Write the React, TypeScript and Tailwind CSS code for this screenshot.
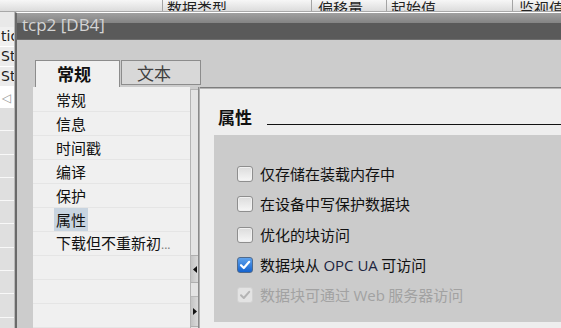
import React from 'react';

function CheckBox({ state }: { state: 'off' | 'on' | 'disabled' }) {
  if (state === 'on') {
    return (
      <span className="w-[16px] h-[16px] rounded-[3px] border border-[#4f6a8c] bg-[linear-gradient(to_bottom,#5ea2ec,#1463cf)] flex items-center justify-center shrink-0">
        <svg width="12" height="12" viewBox="0 0 12 12">
          <path d="M2 6.2 L4.8 9 L10.2 2.8" fill="none" stroke="#ffffff" strokeWidth="2.2" strokeLinecap="round" strokeLinejoin="round" />
        </svg>
      </span>
    );
  }
  if (state === 'disabled') {
    return (
      <span className="w-[16px] h-[16px] rounded-[3px] border border-[#d2d2d2] bg-[#e3e3e3] flex items-center justify-center shrink-0">
        <svg width="12" height="12" viewBox="0 0 12 12">
          <path d="M2 6.2 L4.8 9 L10.2 2.8" fill="none" stroke="#b4b4b4" strokeWidth="2" strokeLinecap="round" strokeLinejoin="round" />
        </svg>
      </span>
    );
  }
  return (
    <span className="w-[16px] h-[16px] rounded-[3px] border border-[#8e8e8e] bg-[linear-gradient(to_bottom,#dcdcdc,#f6f6f6)] shadow-[inset_0_0_0_1px_#f0f0f0] shrink-0" />
  );
}

export default function App() {
  const navItems = ['常规', '信息', '时间戳', '编译', '保护', '属性', '下载但不重新初'];
  const options: { label: React.ReactNode; state: 'off' | 'on' | 'disabled' }[] = [
    { label: '仅存储在装载内存中', state: 'off' },
    { label: '在设备中写保护数据块', state: 'off' },
    { label: '优化的块访问', state: 'off' },
    {
      label: (
        <>
          数据块从 <span className="font-['Open_Sans',sans-serif] text-[#1c2440]">OPC UA</span> 可访问
        </>
      ),
      state: 'on',
    },
    {
      label: (
        <>
          数据块可通过 <span className="font-['Open_Sans',sans-serif]">Web</span> 服务器访问
        </>
      ),
      state: 'disabled',
    },
  ];
  const grayRows = Array.from({ length: 10 });

  return (
    <div className="relative w-[561px] h-[328px] overflow-hidden bg-[#e6e6e6] font-['Noto_Sans_CJK_SC',sans-serif] text-[#111]">
      {/* background table header */}
      <div className="flex h-[12px] bg-[linear-gradient(to_bottom,#f7f7f7,#dcdcdc)] border-b border-[#a8a8a8] text-[15px] text-[#222]">
        <div className="w-[163px] border-r border-[#a4a4a4]" />
        <div className="w-[149px] overflow-hidden flex items-end pl-[4px] border-r border-[#a4a4a4]">
          <span className="leading-[16px] mb-[-5px] whitespace-nowrap">数据类型</span>
        </div>
        <div className="w-[75px] overflow-hidden flex items-end pl-[6px] border-r border-[#a4a4a4]">
          <span className="leading-[16px] mb-[-5px] whitespace-nowrap">偏移量</span>
        </div>
        <div className="w-[126px] overflow-hidden flex items-end pl-[4px] border-r border-[#a4a4a4]">
          <span className="leading-[16px] mb-[-5px] whitespace-nowrap">起始值</span>
        </div>
        <div className="flex-1 overflow-hidden flex items-end pl-[6px]">
          <span className="leading-[16px] mb-[-5px] whitespace-nowrap">监视值</span>
        </div>
      </div>

      {/* background left strip */}
      <div className="w-[15px] flex flex-col border-r border-[#b8b8b8] text-[14px] font-['DejaVu_Sans',sans-serif] text-[#222] overflow-hidden">
        <div className="h-[15px] bg-[#e9e9e9]" />
        <div className="h-[20px] bg-[#f0f0f0] border-b border-white flex items-center pl-[1px] whitespace-nowrap">tic</div>
        <div className="h-[20px] bg-[#ececec] border-b border-white flex items-center pl-[1px]">St</div>
        <div className="h-[20px] bg-[#ececec] border-b border-white flex items-center pl-[1px]">St</div>
        <div className="h-[21px] bg-white flex items-center pl-[2px] text-[#999] text-[12px]">◁</div>
        {grayRows.map((_, i) => (
          <div key={i} className="h-[23.3px] shrink-0 bg-[#dfdfdf] border-b border-[#f8f8f8]" />
        ))}
      </div>

      {/* dialog window */}
      <div className="absolute left-[15px] top-[12px] right-0 bottom-0 flex flex-col border-t border-white border-l-2 border-l-[#6a6a6a] bg-[#cccccc]">
        <div className="h-[27px] shrink-0 flex items-center pl-[5px] pb-[2px] bg-[linear-gradient(to_bottom,#a0a0a0_0px,#848484_10px,#5a5a5a_10px,#5a5a5a_100%)] border-b border-[#6e6e6e]">
          <span className="font-['Open_Sans',sans-serif] text-[17px] leading-[20px] text-[#d4d4d4]">tcp2 [DB4]</span>
        </div>

        {/* tabs */}
        <div className="h-[27px] mt-[20px] shrink-0 flex items-end pl-[18px]">
          <div className="w-[85px] h-[27px] bg-[#f0f0f0] border border-b-0 border-[#8c8c8c] flex items-center pl-[21px] text-[17px] font-bold leading-[20px] relative z-10">
            常规
          </div>
          <div className="w-[80px] h-[25px] ml-[1px] mb-[2px] bg-[#d8d8d8] border border-[#8c8c8c] flex items-center pl-[15px] text-[17px] leading-[20px] text-[#404040]">
            文本
          </div>
        </div>

        {/* content */}
        <div className="flex-1 flex pl-[16px] min-h-0">
          <div className="w-[157px] bg-[#f0f0f0] pt-[1px] flex flex-col text-[15px] leading-[18px]">
            {navItems.map((item, i) => (
              <div key={i} className="h-[24px] shrink-0 border-b border-[#e5e5e5] flex items-center pl-[23px] whitespace-nowrap">
                {item === '属性' ? (
                  <span className="h-full flex items-center bg-[#c8d4e0] px-[2px] ml-[-2px]">{item}</span>
                ) : item === '下载但不重新初' ? (
                  <span>
                    {item}
                    <span className="text-[#7a7a7a] font-['Open_Sans',sans-serif] text-[12px]">...</span>
                  </span>
                ) : (
                  item
                )}
              </div>
            ))}
            <div className="h-[24px] shrink-0 border-b border-[#e5e5e5]" />
            <div className="h-[24px] shrink-0 border-b border-[#e5e5e5]" />
            <div className="h-[24px] shrink-0 border-b border-[#e5e5e5]" />
          </div>

          {/* splitter / scrollbar */}
          <div className="w-[8px] mt-[2px] flex flex-col bg-[#e4e4e4] border-l border-[#b4b4b4] border-t">
            <div className="flex-1" />
            <div className="h-[28px] shrink-0 bg-[linear-gradient(to_right,#c4c4c4,#dadada)] border-y border-[#b0b0b0] flex items-center justify-center">
              <svg width="4" height="7" viewBox="0 0 4 7"><path d="M4 0 L0 3.5 L4 7 Z" fill="#111" /></svg>
            </div>
            <div className="h-[14px] shrink-0 border-b border-[#b8b8b8]" />
            <div className="h-[30px] shrink-0 bg-[linear-gradient(to_right,#c4c4c4,#dadada)] border-b border-[#b0b0b0] flex items-center justify-center">
              <svg width="4" height="7" viewBox="0 0 4 7"><path d="M0 0 L4 3.5 L0 7 Z" fill="#111" /></svg>
            </div>
            <div className="h-[1px] shrink-0" />
          </div>
          <div className="w-[2px] bg-[#8a8a8a] border-r border-[#b0b0b0]" />

          {/* right panel */}
          <div className="flex-1 flex flex-col bg-[#eeeeee] border-t border-[#7d7d7d] shadow-[inset_0_1px_0_#b5b5b5]">
            <div className="flex items-end pl-[18px] mt-[19px] h-[20px]">
              <span className="text-[17px] font-bold leading-[20px]">属性</span>
              <div className="flex-1 h-[1px] bg-[#111] ml-[15px] mb-[2px]" />
            </div>
            <div className="ml-[14px] mt-[8px] h-[187px] bg-[#cbcbcb] pt-[24px] flex flex-col">
              {options.map((o, i) => (
                <div key={i} className="h-[30.3px] shrink-0 flex items-center pl-[23px] gap-[7px]">
                  <CheckBox state={o.state} />
                  <span className={`text-[15px] leading-[18px] whitespace-nowrap ${o.state === 'disabled' ? 'text-[#a2a2a2]' : 'text-[#111]'}`}>
                    {o.label}
                  </span>
                </div>
              ))}
            </div>
          </div>
        </div>
      </div>
    </div>
  );
}
